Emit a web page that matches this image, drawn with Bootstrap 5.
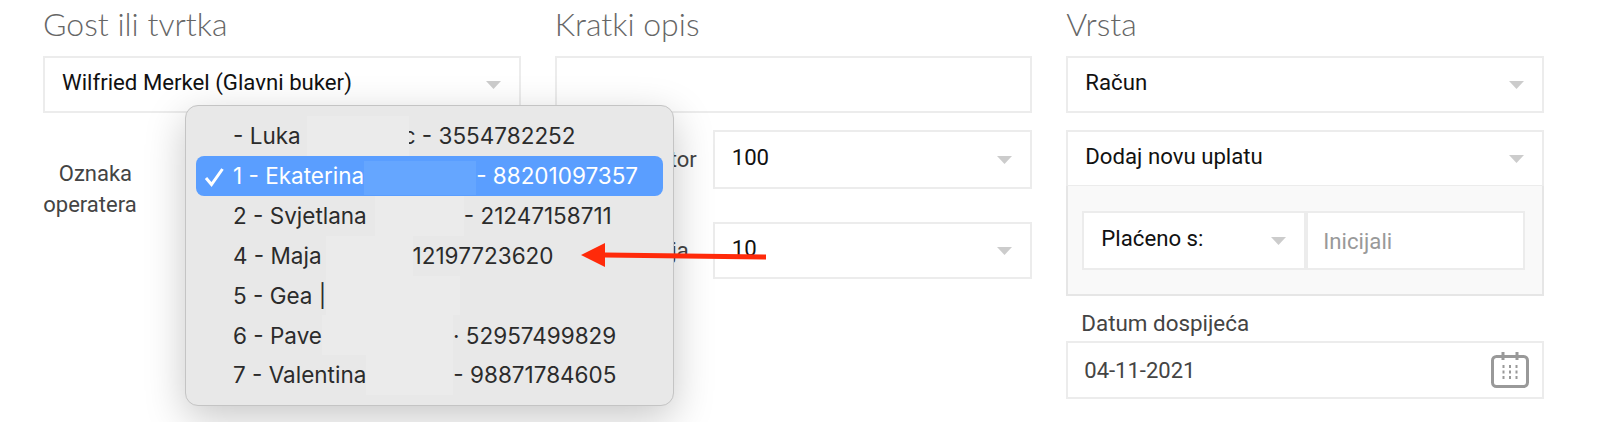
<!DOCTYPE html>
<html lang="hr">
<head>
    <meta charset="UTF-8">
    <title>Račun</title>
    <link href="https://cdn.jsdelivr.net/npm/bootstrap@5.3.0/dist/css/bootstrap.min.css" rel="stylesheet">
    <style>
        body { background: #fff; overflow: hidden; font-family: Roboto, sans-serif; color: #111; }
        .page-wrap { position: relative; height: 422px; padding: 0 56px 0 43px; }
        .form-cols { --bs-gutter-x: 34px; }
        .field-title { font-family: Lato, sans-serif; font-weight: 300; font-size: 32px; line-height: 48px; height: 56px; margin: 0; color: #666; }
        .form-select, .form-control { border: 2px solid #ececec; border-radius: 0; font-size: 22.2px; color: #111; box-shadow: none; }
        .form-select {
            height: 57px; padding: 0 40px 3px 17px;
            background-image: url("data:image/svg+xml,%3csvg xmlns='http://www.w3.org/2000/svg' viewBox='0 0 15 8'%3e%3cpath fill='%23ccc' d='M0 0h15L7.5 8z'/%3e%3c/svg%3e");
            background-size: 15px 8px; background-position: right 18px center;
        }
        .form-control { height: 57px; padding: 0 15px; }
        .form-control::placeholder { color: #999; }
        .tall-select { height: 59px; }
        .gap-next { margin-bottom: 17px; }
        .gap-wide { margin-bottom: 33px; }
        .side-label { flex: 0 0 158px; width: 158px; padding-right: 16px; text-align: right; color: #444; font-size: 22px; margin-bottom: 0; }
        .side-label-far { padding-right: 24px; }
        .op-label { flex: 0 0 94px; text-align: center; line-height: 31px; color: #444; font-size: 22px; margin-right: 58px; padding-top: 28px; }
        .pay-panel { background: #f9f9f9; border: 2px solid #e6e6e6; border-top: 0; margin-top: -1px; padding: 25px 17px 24px 14px; }
        .pay-panel .form-select { width: 224px; flex: none; height: 59px; }
        .pay-panel .form-control { height: 59px; }
        .date-title { font-size: 22.4px; line-height: 24px; margin: 15px 0 6px 15px; color: #444; }
        .date-input { height: 58px; border: 2px solid #ececec; }
        .date-input .form-control { border: 0; height: 54px; color: #444; font-size: 22px; padding-left: 16px; }
        .date-input svg { flex: none; margin-right: 13px; }
        .os-menu {
            position: absolute; left: 185px; top: 105px; width: 489px; height: 301px; padding: 10px;
            background: #e8e8e8; border: 1px solid #c4c4c4; border-radius: 13px;
            box-shadow: 0 12px 40px rgba(0, 0, 0, .22);
            font-family: Inter, sans-serif; font-size: 22.5px; color: #2b2b2b;
        }
        .os-row { position: relative; height: 39.9px; padding-left: 37px; white-space: nowrap; border-radius: 8px; }
        .os-row.is-on { background: #5a9eff; color: #fff; }
        .os-row svg { position: absolute; left: 8px; top: 11px; }
        .blur { align-self: stretch; background: #ebebeb; flex: none; }
        .is-on .blur { background: #65a6ff; margin: 5px 0 1px; }
        .arrow-mark { position: absolute; left: 575px; top: 238px; }
        #b0 { width: 102px; margin: 0 -6px 0 6px; position: relative; z-index: 1; }
        #b1 { width: 112px; } #b2 { width: 89px; } #b3 { width: 87px; }
        #b4 { width: 134px; } #b5 { width: 131px; } #b6 { width: 87px; }
    </style>
</head>
<body>
<div class="page-wrap">
    <div class="row form-cols">
        <div class="col-4">
            <h2 class="field-title">Gost ili tvrtka</h2>
            <select class="form-select gap-next"><option>Wilfried Merkel (Glavni buker)</option></select>
            <div class="d-flex align-items-start">
                <div class="op-label">&nbsp;&nbsp;Oznaka operatera</div>
                <select class="form-select tall-select"><option>1 - Ekaterina</option></select>
            </div>
        </div>
        <div class="col-4">
            <h2 class="field-title">Kratki opis</h2>
            <input type="text" class="form-control gap-next">
            <div class="d-flex align-items-center gap-wide">
                <label class="side-label">Sektor</label>
                <select class="form-select tall-select"><option>100</option></select>
            </div>
            <div class="d-flex align-items-center">
                <label class="side-label side-label-far">Kategorija</label>
                <select class="form-select"><option>10</option></select>
            </div>
        </div>
        <div class="col-4">
            <h2 class="field-title">Vrsta</h2>
            <select class="form-select gap-next"><option>Račun</option></select>
            <select class="form-select"><option>Dodaj novu uplatu</option></select>
            <div class="pay-panel">
                <div class="d-flex">
                    <select class="form-select"><option>Plaćeno s:</option></select>
                    <input type="text" class="form-control" placeholder="Inicijali">
                </div>
            </div>
            <div class="date-title">Datum dospijeća</div>
            <div class="date-input d-flex align-items-center">
                <input type="text" class="form-control" value="04-11-2021">
                <svg width="38" height="36" viewBox="0 0 38 36" fill="none">
                    <rect x="1.5" y="4.5" width="35" height="30" rx="4" stroke="#999" stroke-width="3"/>
                    <path d="M12 0v8M26 0v8" stroke="#999" stroke-width="3"/>
                    <path d="M11.5 14.5h2M18 14.5h2M24.5 14.5h2M11.5 20h2M18 20h2M24.5 20h2M11.5 25.5h2M18 25.5h2M24.5 25.5h2" stroke="#999" stroke-width="3"/>
                </svg>
            </div>
        </div>
    </div>

    <div class="os-menu">
        <div class="os-row d-flex align-items-center"><span>- Luka</span><span class="blur" id="b0"></span><span>c - 3554782252</span></div>
        <div class="os-row is-on d-flex align-items-center">
            <svg width="21" height="20" viewBox="0 0 21 20" fill="none"><path d="M2 11l5.5 6.5L18.5 2" stroke="#fff" stroke-width="3"/></svg>
            <span>1 - Ekaterina</span><span class="blur" id="b1"></span><span>- 88201097357</span>
        </div>
        <div class="os-row d-flex align-items-center"><span>2 - Svjetlana</span><span class="blur ms-2" id="b2"></span><span>- 21247158711</span></div>
        <div class="os-row d-flex align-items-center"><span>4 - Maja</span><span class="blur ms-1" id="b3"></span><span>12197723620</span></div>
        <div class="os-row d-flex align-items-center"><span>5 - Gea |</span><span class="blur" id="b4"></span></div>
        <div class="os-row d-flex align-items-center"><span>6 - Pave</span><span class="blur" id="b5"></span><span>· 52957499829</span></div>
        <div class="os-row d-flex align-items-center"><span>7 - Valentina</span><span class="blur" id="b6"></span><span>- 98871784605</span></div>
    </div>

    <svg class="arrow-mark" width="195" height="32" viewBox="0 0 195 32">
        <path d="M6 17L30 5v9.5L191 16.5v5L30 19.5V29z" fill="#ff2a0a"/>
    </svg>
</div>
<script src="https://cdn.jsdelivr.net/npm/bootstrap@5.3.0/dist/js/bootstrap.bundle.min.js"></script>
</body>
</html>
